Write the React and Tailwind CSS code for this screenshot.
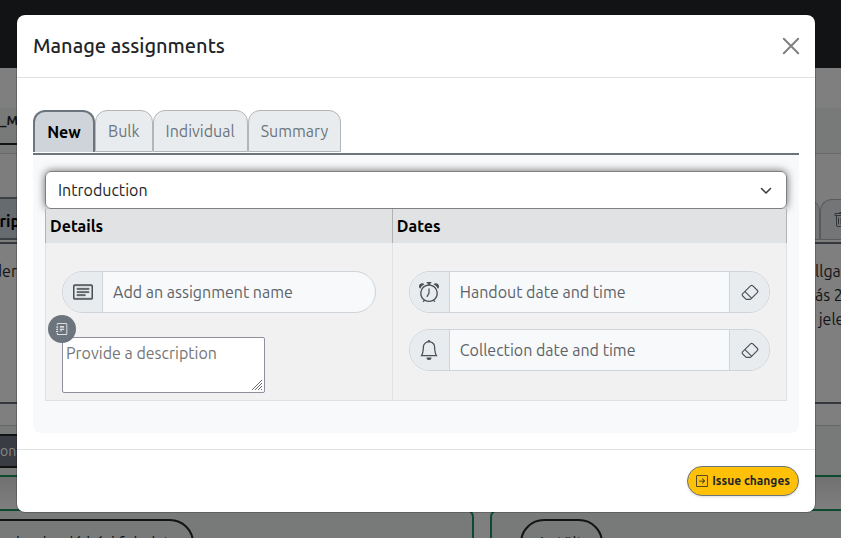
import { BsAlarm, BsArrowRightSquare, BsBell, BsCardText, BsEraser, BsJournalText, BsTrash } from "react-icons/bs";

const tabs = ["Bulk", "Individual", "Summary"];

function Backdrop() {
  return (
    <div aria-hidden="true" className="flex h-screen flex-col overflow-hidden bg-[#7f7f7f] text-base text-[#111315]">
      <div className="h-[68px] shrink-0 bg-[#111315]" />
      <div className="h-10 shrink-0" />
      <div className="flex h-[46px] shrink-0 items-start border-b border-[#666868] bg-[#777a79]">
        <div className="flex h-[37px] w-24 items-center border-b-2 border-[#111315] pb-2.5 text-[13px] font-bold">_M</div>
      </div>
      <div className="flex h-[90px] shrink-0 items-end justify-between border-b-2 border-[#34383d] bg-[#7d7d7d]">
        <div className="mb-0.5 flex h-[43px] w-5 items-center justify-end overflow-hidden border-y-2 border-[#3c4045] bg-[#666b70] pt-1 font-bold text-black">
          crip
        </div>
        <div className="flex h-[43px] w-28 justify-end pb-0.5">
          <div className="w-24 rounded-tr-xl border border-[#5a5a5a] bg-[#737576]" />
          <div className="flex w-[21px] shrink-0 items-center rounded-tl-xl border border-r-0 border-[#5a5a5a] bg-[#737576] pl-3 text-[#33373b]">
            <BsTrash className="shrink-0" />
          </div>
        </div>
      </div>
      <div className="flex h-[160px] shrink-0 justify-between border-b-2 border-[#34383d] pt-[15px] leading-6">
        <p className="flex w-[17px] justify-end">der</p>
        <p className="w-[26px] whitespace-nowrap">
          llga
          <br />
          ás 2
          <br />
          &nbsp;jele
        </p>
      </div>
      <div className="flex h-[22px] shrink-0 border-b border-[#666868]" />
      <div className="h-[51px] shrink-0 border-b-2 border-[#0e4a2f] bg-[#777a79] pt-2">
        <div className="flex h-[34px] w-24 items-center border-y-2 border-[#111315] bg-[#393c42] text-sm text-[#85888b]">onn</div>
      </div>
      <div className="h-8 shrink-0 bg-linear-to-b from-[#717171] to-[#7f7f7f]" />
      <div className="flex h-20 shrink-0 gap-4">
        <div className="w-[474px] rounded-tr-lg border-2 border-l-0 border-[#0e4a2f] bg-[#777a79] pt-2">
          <div className="h-16 w-[194px] rounded-tr-3xl border-2 border-l-0 border-[#111315] pt-2.5 pl-4 text-base whitespace-nowrap">
            leadandó házi feladat
          </div>
        </div>
        <div className="grow rounded-tl-lg border-2 border-r-0 border-[#0e4a2f] bg-[#777a79] pt-2 pl-7">
          <div className="h-16 w-[83px] rounded-t-3xl border-2 border-[#111315] pt-2.5 text-center text-base">Letölt</div>
        </div>
      </div>
    </div>
  );
}

function DateField({ id, label, Icon }) {
  return (
    <div className="flex h-[42px] overflow-hidden rounded-full border border-[#ced4da] bg-[#f8f9fa]">
      <label htmlFor={id} aria-label={label} className="flex w-10 shrink-0 items-center justify-center border-r border-[#ced4da] bg-[#e9ecef]">
        <Icon className="size-5 text-[#495057]" />
      </label>
      <input id={id} type="text" placeholder={label} className="min-w-0 grow px-2.5 outline-none placeholder:text-[#5c6369]" />
      <button type="button" aria-label={`Clear ${label}`} className="flex w-10 shrink-0 items-center justify-center border-l border-[#ced4da] bg-[#e9ecef]">
        <BsEraser className="size-[18px] text-[#495057]" />
      </button>
    </div>
  );
}

export default function App() {
  return (
    <div className="relative font-['Ubuntu','Noto_Sans',sans-serif]">
      <Backdrop />
      <div className="absolute inset-0 flex items-start justify-center pt-[15px] pr-[26px] pl-[17px]">
        <div role="dialog" aria-labelledby="dialog-title" className="w-full max-w-[800px] rounded-lg bg-white text-[#212529] outline outline-black/20">
          <header className="flex h-[63px] items-center justify-between border-b border-[#dee2e6] px-4">
            <h1 id="dialog-title" className="text-xl font-medium">Manage assignments</h1>
            <button type="button" aria-label="Close" className="flex size-4 items-center justify-center">
              <svg viewBox="0 0 16 16" className="size-4 shrink-0 overflow-visible" fill="none" stroke="#808080" strokeWidth="2" strokeLinecap="round">
                <path d="M.8.8l14.4 14.4M15.2.8.8 15.2" />
              </svg>
            </button>
          </header>

          <main className="px-4 pt-8 pb-4">
            <div role="tablist" className="flex h-[45px] items-start border-b-2 border-[#6c757d]">
              <button type="button" role="tab" aria-selected="true" className="h-[42px] w-[62px] rounded-t-xl border-2 border-b-0 border-[#6c757d] bg-[#ced4da] font-bold text-black">
                New
              </button>
              {tabs.map((tab) => (
                <button key={tab} type="button" role="tab" aria-selected="false" className="h-[42px] rounded-t-xl border border-[#b5b5b5] bg-[#e9ecef] px-3 text-[#6c757d]">
                  {tab}
                </button>
              ))}
            </div>

            <section className="rounded-b-lg bg-[#f8f9fb] px-3 pt-4 pb-8">
              <div className="relative rounded-md shadow-[0_0_8px_rgba(0,0,0,0.6)]">
                <select aria-label="Section" className="h-[38px] w-full appearance-none rounded-md border border-[#808080] bg-white px-3 outline-none">
                  <option>Introduction</option>
                </select>
                <svg viewBox="0 0 16 16" className="pointer-events-none absolute top-3 right-[13px] size-4" fill="none" stroke="#343a40" strokeWidth="1.5" strokeLinecap="round" strokeLinejoin="round">
                  <path d="m3.5 5.5 4.5 4.5 4.5-4.5" />
                </svg>
              </div>
              <table className="relative w-full table-fixed border-collapse bg-[#f1f1f1]">
                <colgroup>
                  <col className="w-[46.8%]" />
                  <col className="w-[53.2%]" />
                </colgroup>
                <thead>
                  <tr className="h-[33px] bg-[#e1e2e4] text-left text-black">
                    <th className="border-x border-[#b0b2b4] px-1 pt-0.5 font-bold">Details</th>
                    <th className="border-x border-[#b0b2b4] px-1 pt-0.5 font-bold">Dates</th>
                  </tr>
                </thead>
                <tbody>
                  <tr>
                    <td className="border border-[#dee2e6] px-4 pt-7 pb-[7px] align-top">
                      <div className="flex h-[42px] overflow-hidden rounded-full border border-[#ced4da] bg-[#f8f9fa]">
                        <label htmlFor="name" aria-label="Assignment name" className="flex w-10 shrink-0 items-center justify-center border-r border-[#ced4da] bg-[#e9ecef]">
                          <BsCardText className="size-5 text-[#495057]" strokeWidth="0.4" />
                        </label>
                        <input id="name" type="text" placeholder="Add an assignment name" className="min-w-0 grow px-2.5 outline-none placeholder:text-[#5c6369]" />
                      </div>
                      <div className="relative w-[203px] pt-6">
                        <textarea aria-label="Description" placeholder="Provide a description" className="block h-14 w-full resize-none rounded-xs border border-[#8f8f9d] bg-white px-[3px] py-[3px] leading-6 placeholder:text-[#757575]" />
                        <svg viewBox="0 0 10 10" aria-hidden="true" className="pointer-events-none absolute right-[3px] bottom-[3px] size-2.5" stroke="#6b6b6b" strokeWidth="1">
                          <path d="M0 10 10 0M3 10l7-7M6 10l4-4M9 10l1-1" />
                        </svg>
                        <span className="absolute top-0.5 -left-3.5 flex size-7 items-center justify-center rounded-full bg-[#6c757d] text-white">
                          <BsJournalText className="size-3" />
                        </span>
                      </div>
                    </td>
                    <td className="border border-[#dee2e6] px-4 pt-7 pb-[7px] align-top">
                      <div className="flex flex-col gap-4">
                        <DateField id="handout" label="Handout date and time" Icon={BsAlarm} />
                        <DateField id="collection" label="Collection date and time" Icon={BsBell} />
                      </div>
                    </td>
                  </tr>
                </tbody>
              </table>
            </section>
          </main>

          <footer className="flex justify-end border-t border-[#dee2e6] p-4">
            <button type="button" className="flex h-[30px] items-center gap-1 rounded-full border border-[#6c757d] bg-[#ffc107] px-2 text-xs font-bold whitespace-nowrap shadow-sm">
              <BsArrowRightSquare />
              Issue changes
            </button>
          </footer>
        </div>
      </div>
    </div>
  );
}
